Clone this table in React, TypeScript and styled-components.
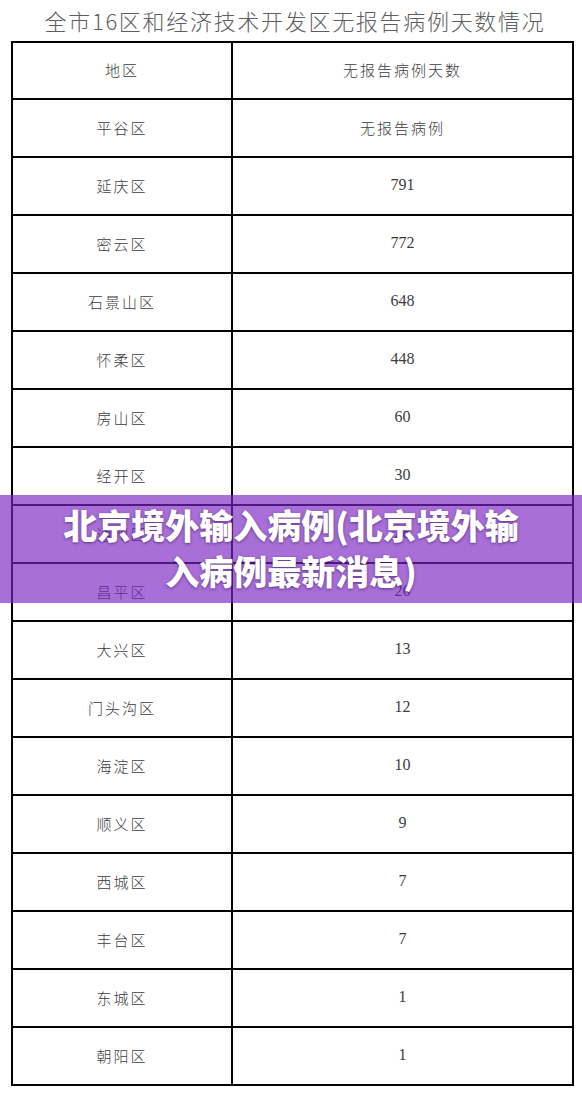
import React from "react";
import styled, { createGlobalStyle } from "styled-components";

const GlobalStyle = createGlobalStyle`
  html, body {
    margin: 0;
    padding: 0;
    background: #ffffff;
  }
  * { box-sizing: border-box; }
`;

const Page = styled.div`
  position: relative;
  width: 582px;
  height: 1098px;
  background: #ffffff;
  overflow: hidden;
  font-family: "Noto Sans CJK SC", "Noto Sans", sans-serif;
`;

const Title = styled.h1`
  margin: 0;
  height: 41px;
  display: flex;
  align-items: center;
  justify-content: center;
  padding-left: 8px;
  padding-bottom: 2px;
  font-family: "Noto Sans CJK SC", sans-serif;
  font-weight: 300;
  font-size: 22px;
  letter-spacing: 1.7px;
  color: #5e5e5e;
`;

const Table = styled.div`
  margin-left: 11px;
  width: 563px;
  display: grid;
  grid-template-columns: 220px 341px;
  border-left: 2px solid #000;
  border-top: 2px solid #000;
`;

const Cell = styled.div<{ $header?: boolean; $num?: boolean }>`
  height: ${(p) => (p.$header ? "57px" : "58px")};
  border-right: 2px solid #000;
  border-bottom: 2px solid #000;
  display: flex;
  align-items: center;
  justify-content: center;
  padding-bottom: 2px;
  color: #3c3c3c;
  font-family: ${(p) =>
    p.$num ? '"Liberation Serif", serif' : '"Noto Sans CJK SC", sans-serif'};
  font-size: ${(p) => (p.$num ? "16px" : "15px")};
  font-weight: 300;
  letter-spacing: ${(p) => (p.$num ? "0" : "2px")};
`;

const Banner = styled.div`
  position: absolute;
  left: 0;
  top: 495px;
  width: 582px;
  height: 108px;
  background: rgba(122, 37, 195, 0.66);
  display: flex;
  align-items: center;
  justify-content: center;
  padding: 0 50px;
`;

const BannerText = styled.div`
  color: #ffffff;
  font-family: "Noto Sans CJK SC", sans-serif;
  font-weight: 900;
  font-size: 34px;
  line-height: 46px;
  text-align: center;
  text-shadow: 0 1px 3px rgba(40, 0, 70, 0.55);
  margin-top: -3px;
`;

const rows: [string, string][] = [
  ["平谷区", "无报告病例"],
  ["延庆区", "791"],
  ["密云区", "772"],
  ["石景山区", "648"],
  ["怀柔区", "448"],
  ["房山区", "60"],
  ["经开区", "30"],
  ["通州区", "28"],
  ["昌平区", "26"],
  ["大兴区", "13"],
  ["门头沟区", "12"],
  ["海淀区", "10"],
  ["顺义区", "9"],
  ["西城区", "7"],
  ["丰台区", "7"],
  ["东城区", "1"],
  ["朝阳区", "1"],
];

export default function App() {
  return (
    <Page>
      <GlobalStyle />
      <Title>全市16区和经济技术开发区无报告病例天数情况</Title>
      <Table>
        <Cell $header>地区</Cell>
        <Cell $header>无报告病例天数</Cell>
        {rows.map(([area, days]) => (
          <React.Fragment key={area}>
            <Cell>{area}</Cell>
            <Cell $num={/^\d+$/.test(days)}>{days}</Cell>
          </React.Fragment>
        ))}
      </Table>
      <Banner>
        <BannerText>北京境外输入病例(北京境外输入病例最新消息)</BannerText>
      </Banner>
    </Page>
  );
}
